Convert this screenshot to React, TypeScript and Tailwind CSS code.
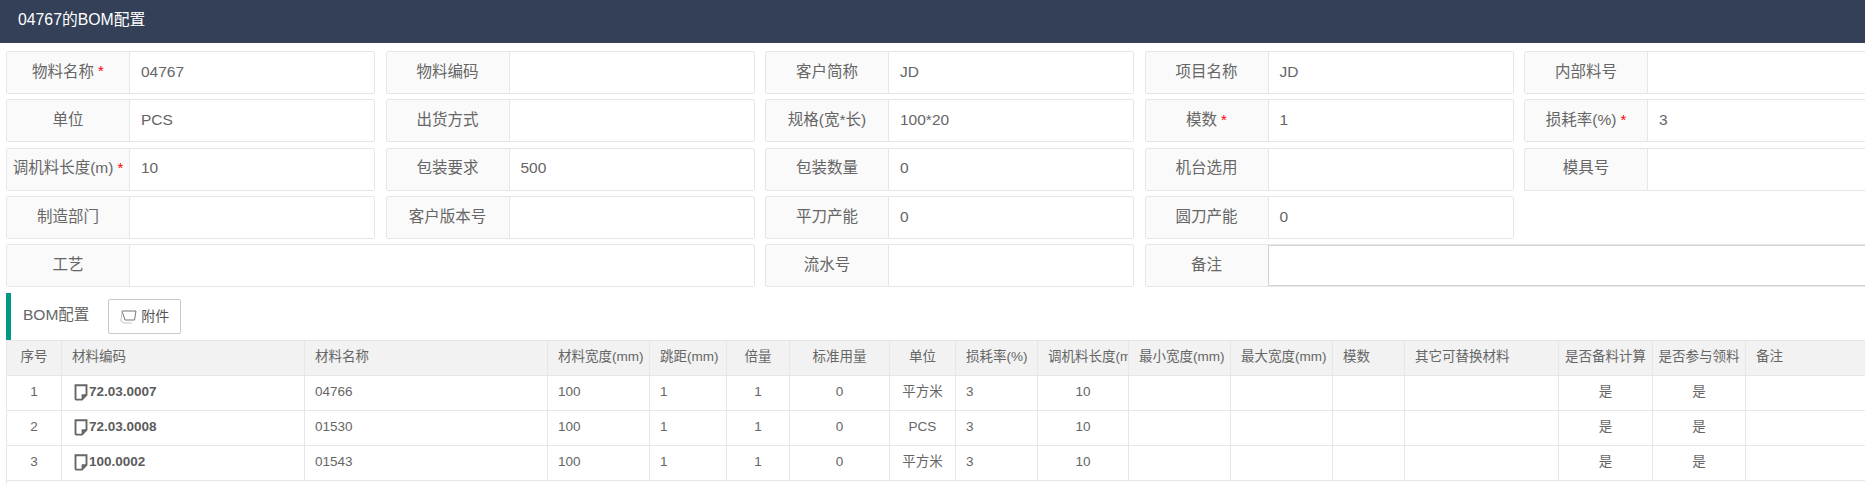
const FONT = "font-['Liberation_Sans','Noto_Sans_CJK_SC',sans-serif]"

type Field = {
  label: string
  value?: string
  required?: boolean
  wide?: boolean
  area?: boolean
}

const fields: (Field | null)[] = [
  { label: "物料名称", value: "04767", required: true },
  { label: "物料编码" },
  { label: "客户简称", value: "JD" },
  { label: "项目名称", value: "JD" },
  { label: "内部料号" },
  { label: "单位", value: "PCS" },
  { label: "出货方式" },
  { label: "规格(宽*长)", value: "100*20" },
  { label: "模数", value: "1", required: true },
  { label: "损耗率(%)", value: "3", required: true },
  { label: "调机料长度(m)", value: "10", required: true },
  { label: "包装要求", value: "500" },
  { label: "包装数量", value: "0" },
  { label: "机台选用" },
  { label: "模具号" },
  { label: "制造部门" },
  { label: "客户版本号" },
  { label: "平刀产能", value: "0" },
  { label: "圆刀产能", value: "0" },
  null,
  { label: "工艺", wide: true },
  { label: "流水号" },
  { label: "备注", wide: true, area: true },
]

type Col = { title: string; width: number; center?: boolean; headLeft?: boolean }

const cols: Col[] = [
  { title: "序号", width: 55, center: true },
  { title: "材料编码", width: 243 },
  { title: "材料名称", width: 243 },
  { title: "材料宽度(mm)", width: 102 },
  { title: "跳距(mm)", width: 77 },
  { title: "倍量", width: 63, center: true },
  { title: "标准用量", width: 100, center: true },
  { title: "单位", width: 66, center: true },
  { title: "损耗率(%)", width: 82 },
  { title: "调机料长度(mm)", width: 91, center: true, headLeft: true },
  { title: "最小宽度(mm)", width: 102 },
  { title: "最大宽度(mm)", width: 102 },
  { title: "模数", width: 72 },
  { title: "其它可替换材料", width: 154 },
  { title: "是否备料计算", width: 94, center: true },
  { title: "是否参与领料", width: 93, center: true },
  { title: "备注", width: 160 },
]

const rows = [
  ["72.03.0007", "04766", "平方米"],
  ["72.03.0008", "01530", "PCS"],
  ["100.0002", "01543", "平方米"],
]

function NoteIcon() {
  return (
    <svg width="14" height="17" viewBox="0 0 14 17" fill="none" className="shrink-0 text-[#666]">
      <path
        d="M1.5 1.2h11v9.6L8 15.6H2.5a1 1 0 0 1-1-1z"
        stroke="currentColor"
        strokeWidth="1.9"
      />
      <path d="M12.6 10.2H7.6v5.6z" fill="currentColor" />
    </svg>
  )
}

function AttachIcon() {
  return (
    <svg width="17" height="15" viewBox="0 0 17 15" fill="none" className="shrink-0">
      <path d="M2 2h14l-1.5 9H5z" stroke="#777" strokeWidth="1" />
      <path d="M2 2 1 12l3 2h8" stroke="#c9c4bd" strokeWidth="1" />
    </svg>
  )
}

function FormField({ field }: { field: Field }) {
  return (
    <div
      className={`flex h-[43px] overflow-hidden rounded-[2px] border border-[#e6e6e6] ${
        field.wide ? "col-span-2" : ""
      }`}
    >
      <div
        className={`flex w-[123px] shrink-0 items-center justify-center whitespace-nowrap border-r bg-[#fafafa] pb-[2px] text-[15.5px] text-[#666] ${
          field.area ? "border-[#d2d2d2]" : "border-[#e6e6e6]"
        }`}
      >
        <span>{field.label}</span>
        {field.required && <span className="ml-1 text-[15px] text-[#ff0000]">*</span>}
      </div>
      <div
        className={`flex flex-1 items-center bg-white pb-[2px] pl-[11px] text-[15.5px] text-[#666] ${
          field.area ? "border-y border-[#d2d2d2]" : ""
        }`}
      >
        {field.value}
      </div>
    </div>
  )
}

export default function App() {
  return (
    <div className={`h-[484px] w-[1865px] overflow-hidden bg-white ${FONT}`}>
      <div className="flex h-[43px] items-center bg-[#344058] pl-[18px] pb-[3px] text-[15.8px] text-white">
        04767的BOM配置
      </div>

      <div className="w-[1950px] pl-[6px] pt-2">
        <div className="grid grid-cols-[repeat(5,369px)] gap-x-[10.5px] gap-y-[5.25px]">
          {fields.map((field, i) =>
            field ? <FormField key={i} field={field} /> : <div key={i} />
          )}
        </div>

        {/* BOM toolbar */}
        <div className="mt-[6px] flex h-[47px] items-center border-l-[5px] border-[#009688] pl-[12px]">
          <span className="pb-[3px] text-[15.5px] text-[#666]">BOM配置</span>
          <button className="ml-[19px] mb-[1px] flex h-[35px] w-[73px] items-center justify-center gap-[4px] rounded-[2px] border border-[#c9c9c9] bg-white text-[14px] text-[#555]">
            <AttachIcon />
            附件
          </button>
        </div>

        <table className="w-[1899px] table-fixed border-collapse text-[13.5px] text-[#666]">
          <colgroup>
            {cols.map((col) => (
              <col key={col.title} style={{ width: col.width }} />
            ))}
          </colgroup>
          <thead>
            <tr className="h-[35px] bg-[#f2f2f2]">
              {cols.map((col) => (
                <th
                  key={col.title}
                  className={`overflow-hidden whitespace-nowrap border border-[#e6e6e6] pb-[2px] font-normal ${
                    col.center && !col.headLeft ? "px-0 text-center" : "px-[10px] text-left"
                  }`}
                >
                  {col.title}
                </th>
              ))}
            </tr>
          </thead>
          <tbody>
            {rows.map(([code, name, unit], i) => {
              const cells = [
                String(i + 1),
                code,
                name,
                "100",
                "1",
                "1",
                "0",
                unit,
                "3",
                "10",
                "",
                "",
                "",
                "",
                "是",
                "是",
                "",
              ]
              return (
                <tr key={code} className="h-[35px]">
                  {cells.map((cell, c) => (
                    <td
                      key={c}
                      className={`whitespace-nowrap border border-[#e6e6e6] px-[10px] pt-0 pb-[2px] ${
                        cols[c].center ? "text-center" : "text-left"
                      }`}
                    >
                      {c === 1 ? (
                        <span className="ml-[2px] flex items-center gap-[1px] font-bold text-[#5c5c5c]">
                          <NoteIcon />
                          {cell}
                        </span>
                      ) : (
                        cell
                      )}
                    </td>
                  ))}
                </tr>
              )
            })}
          </tbody>
        </table>
        <div className="h-5 border-l border-[#e6e6e6]" />
      </div>
    </div>
  )
}
